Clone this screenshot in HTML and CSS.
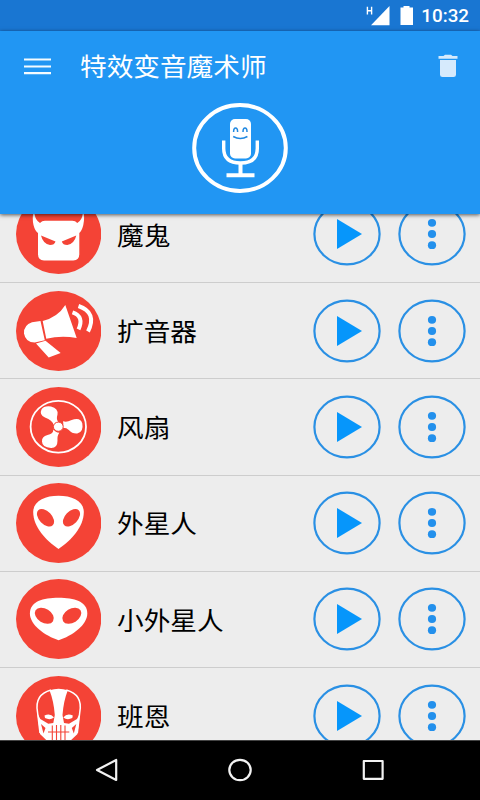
FILE: index.html
```html
<!DOCTYPE html>
<html lang="zh-CN">
<head>
<meta charset="utf-8">
<title>特效变音魔术师</title>
<link rel="stylesheet" href="styles.css">
</head>
<body>
<svg class="defs" width="0" height="0">
  <symbol id="play" viewBox="0 0 68 64"><ellipse cx="34" cy="32" rx="32.6" ry="30.4" fill="none" stroke="#2a90e4" stroke-width="2.2"/><path d="M24 17v30l25-15z" fill="#0696fb"/></symbol>
  <symbol id="more" viewBox="0 0 68 64"><ellipse cx="34" cy="32" rx="32.6" ry="30.4" fill="none" stroke="#2a90e4" stroke-width="2.2"/><g fill="#2390ec"><ellipse cx="34" cy="20.8" rx="4.1" ry="3.9"/><ellipse cx="34" cy="32" rx="4.1" ry="3.9"/><ellipse cx="34" cy="43.2" rx="4.1" ry="3.9"/></g></symbol>
</svg>
<div class="screen">
  <div class="status">
    <svg width="50" height="31" viewBox="0 0 50 31"><path d="M2.400 6.800v7.800M6.600 6.800v7.800M2.400 10.700h4.200" stroke="#fff" stroke-width="1.400" fill="none"/><path d="M24.500 6v19.300H6z" fill="#fff"/><path d="M35.500 7.500h3V6h6v1.500h3.500V25H35.500z" fill="#fff"/></svg>
    <span class="time">10:32</span>
  </div>
  <header class="header">
    <div class="toolbar">
      <svg class="menu" width="28" height="20" viewBox="0 0 28 20"><path d="M0 3.500h27M0 10.500h27M0 17.200h27" stroke="#f4fbff" stroke-width="2.200"/></svg>
      <h1 class="title">特效变音魔术师</h1>
      <svg class="trash" width="20" height="24" viewBox="0 0 20 24"><path d="M.5 2.100h5L7 .8h6l1.500 1.300h5v2.600H.5zM2 6.100h16v14.600q0 2.400-2.500 2.400h-11Q2 23.100 2 20.700z" fill="#d6eafc"/></svg>
    </div>
    <svg class="mic" width="96" height="90" viewBox="0 0 96 90"><ellipse cx="48" cy="45" rx="45.800" ry="42.900" fill="none" stroke="#fff" stroke-width="4"/><rect x="38" y="16" width="21" height="39.500" rx="5" fill="#fff"/><path d="M31.700 37.500v8q0 14.500 16.800 14.500t16.800-14.500v-8" fill="none" stroke="#fff" stroke-width="3.400"/><path d="M48.500 60v12M34.500 72.200h28" fill="none" stroke="#fff" stroke-width="4"/><path d="M41.600 29c0-5.200 4-5.200 4 0M51 29c0-5.200 4-5.200 4 0M41.200 33.500q7.100 4 14.200 0" fill="none" stroke="#2088e0" stroke-width="1.500"/></svg>
  </header>
  <main class="viewport">
    <ul class="list">
      <li class="row">
        <svg class="avatar" viewBox="0 0 85.300 80"><ellipse cx="42.650" cy="40" rx="42.650" ry="40" fill="#f44336"/><path d="M19 13Q17 25 24 29q2-2.300 5-2.300h27.300q3 0 5 2.300 7-4 5-16 3 9 1 18-1.500 6-4 8v21q0 6.400-6 6.400H28q-6 0-6-6.400V39q-3-2-4.500-8-2-9 1.500-18z" fill="#fff"/><path d="M25 41.500l14.500 5.900q-1 3.500-5.500 3.500-7-1-9-9.400zM60.300 41.500l-14.500 5.900q1 3.500 5.500 3.500 7-1 9-9.400z" fill="#f44336"/></svg>
        <span class="label">魔鬼</span>
        <svg class="action"><use href="#play"/></svg><svg class="action"><use href="#more"/></svg>
      </li>
      <li class="row">
        <svg class="avatar" viewBox="0 0 85.300 80"><ellipse cx="42.650" cy="40" rx="42.650" ry="40" fill="#f44336"/><path d="M24.500 30l4.300 19.300-10 2.200Q9.500 51.500 8 42.500 7.500 34 16 31.200zM26.700 30Q42 26 49.300 14L60.700 47Q45 44 30.300 47.800zM20 52.500l9.500-2.800L44.700 62l-12 4.400z" fill="#fff"/><path d="M56.500 21.300q12 4 6 17M62.500 15q19 6.500 9.500 25.500" fill="none" stroke="#fff" stroke-width="4"/></svg>
        <span class="label">扩音器</span>
        <svg class="action"><use href="#play"/></svg><svg class="action"><use href="#more"/></svg>
      </li>
      <li class="row">
        <svg class="avatar" viewBox="0 0 85.300 80"><ellipse cx="42.650" cy="40" rx="42.650" ry="40" fill="#f44336"/><ellipse cx="42.300" cy="39.700" rx="27.700" ry="25.900" fill="none" stroke="#fff" stroke-width="1.800"/><path d="M37.500 38Q36.500 33 29 30.500 23 27.500 25.500 22.500 28 18.500 35 19.500q7.500 2 6.500 8-1.500 5 .8 7.500-3 0-4.800 3zM47 34.300q4 1.200 8-1 9.500-3.800 11.300 3.200 1.500 8.500-5 10-5 .5-8.500-3.500-2-2.300-5.800-2.300.8-3.600 0-6.400zM37.500 42.500q1.800 3 5.800 3.200-2.300 3-1.800 8 0 7.500-6.500 7.300-9-1-9-6.500-.5-5 5.500-6.500 5.500-1 6-5.500z" fill="#fff"/><ellipse cx="42.300" cy="39.700" rx="4.900" ry="4.600" fill="#fff" stroke="#f44336" stroke-width="1"/></svg>
        <span class="label">风扇</span>
        <svg class="action"><use href="#play"/></svg><svg class="action"><use href="#more"/></svg>
      </li>
      <li class="row">
        <svg class="avatar" viewBox="0 0 85.300 80"><ellipse cx="42.650" cy="40" rx="42.650" ry="40" fill="#f44336"/><path d="M42.500 12.800C56 12.800 67.800 18 67.800 29 67.800 44 55 57.500 42.500 66 30 57.500 17.200 44 17.200 29 17.200 18 29 12.800 42.500 12.800z" fill="#fff"/><g fill="#f44336"><ellipse cx="29.500" cy="34.700" rx="10.400" ry="6.400" transform="rotate(46 29.500 34.700)"/><ellipse cx="55.500" cy="34.700" rx="10.400" ry="6.400" transform="rotate(-46 55.500 34.700)"/></g></svg>
        <span class="label">外星人</span>
        <svg class="action"><use href="#play"/></svg><svg class="action"><use href="#more"/></svg>
      </li>
      <li class="row">
        <svg class="avatar" viewBox="0 0 85.300 80"><ellipse cx="42.650" cy="40" rx="42.650" ry="40" fill="#f44336"/><path d="M42.600 18.800C58 18.800 71.300 22.500 71.300 34.500 71.300 46 56 57 42.600 61.200 29.200 57 13.900 46 13.900 34.500 13.900 22.500 27 18.800 42.600 18.800z" fill="#fff"/><g fill="#f44336"><ellipse cx="28.300" cy="36.700" rx="10.300" ry="7" transform="rotate(32 28.300 36.700)"/><ellipse cx="55.800" cy="36.700" rx="10.300" ry="7" transform="rotate(-32 55.800 36.700)"/></g></svg>
        <span class="label">小外星人</span>
        <svg class="action"><use href="#play"/></svg><svg class="action"><use href="#more"/></svg>
      </li>
      <li class="row">
        <svg class="avatar" viewBox="0 0 85.300 80"><ellipse cx="42.650" cy="40" rx="42.650" ry="40" fill="#f44336"/><path d="M35 14C24 17 19.500 25 21.500 36L24 57M50.300 14c11 3 15.500 11 13.500 22L61.300 57" fill="none" stroke="#fff" stroke-width="1.500"/><path d="M33.500 14.300Q42.600 11 51.800 14.300q-4.300 11-5.300 24.700l1.500 8 5 .8 8-4.800 3-6L61.500 58 52 67H33.300L24 58l-2.700-21 3 6 8 4.800 5-.8 1.500-8q-1-13.700-5.300-24.700z" fill="#fff"/><path d="M28.500 39.500q6-2.500 9.500 2-4 3-9 .5zM56.800 39.500q-6-2.500-9.500 2 4 3 9 .5z" fill="#fff"/><path d="M25 48l4.500 4-2 5.500zM60.300 48l-4.500 4 2 5.500z" fill="#f44336"/><path d="M32 56h21.300M36.300 49.500v16M40.500 49v17M44.800 49v17M49 49.500v16" fill="none" stroke="#f44336" stroke-width="1.100"/></svg>
        <span class="label">班恩</span>
        <svg class="action"><use href="#play"/></svg><svg class="action"><use href="#more"/></svg>
      </li>
    </ul>
  </main>
  <nav class="nav">
    <svg width="28" height="28" viewBox="0 0 28 28"><path d="M23.200 4v20L4 14z"/></svg>
    <svg width="28" height="28" viewBox="0 0 28 28"><ellipse cx="14" cy="14" rx="10.700" ry="10.200"/></svg>
    <svg width="28" height="28" viewBox="0 0 28 28"><rect x="4.800" y="5" width="18.800" height="17.800"/></svg>
  </nav>
</div>
</body>
</html>
```

FILE: styles.css
```css
* { box-sizing: border-box; }
body { margin: 0; font-family: "Noto Sans CJK SC", sans-serif; }
.defs { display: block; height: 0; }
.screen {
  width: 480px;
  height: 800px;
  display: flex;
  flex-direction: column;
  overflow: hidden;
  background: #ededed;
}
.status {
  height: 31px;
  flex: none;
  display: flex;
  justify-content: flex-end;
  padding-right: 11px;
  background: #1976d2;
}
.time {
  width: 48px;
  margin-left: 6px;
  font: 500 18.800px/33px Roboto, sans-serif;
  color: #fff;
  text-align: right;
}
.header {
  position: relative;
  z-index: 1;
  height: 183px;
  flex: none;
  background: #2196f3;
  box-shadow: 0 1px 4px rgba(0, 0, 0, .65);
}
.toolbar {
  height: 70px;
  display: flex;
  align-items: center;
  padding: 0 22px 0 24px;
}
.title {
  flex: 1;
  margin: 0 0 2px 28px;
  font-size: 25px;
  font-weight: 400;
  line-height: 36px;
  color: #fff;
  transform: scaleX(1.066);
  transform-origin: left;
}
.mic { display: block; margin: 2px auto 0; }
.viewport { flex: 1; min-height: 0; overflow: hidden; }
.list { list-style: none; margin: -27.400px 0 0; padding: 0; }
.row {
  height: 96.300px;
  display: flex;
  align-items: center;
  padding: 0 14px 0 16px;
  border-bottom: 1px solid #cdcdcd;
}
.avatar { width: 85.300px; height: 80px; flex: none; }
.label {
  flex: 1;
  margin: 0 0 1.500px 15.700px;
  font-size: 25px;
  line-height: 36px;
  color: #000;
  transform: scaleX(1.066);
  transform-origin: left;
}
.action { width: 68px; height: 64px; flex: none; }
.action + .action { margin-left: 17.300px; }
.nav {
  height: 60px;
  flex: none;
  display: flex;
  justify-content: center;
  align-items: center;
  gap: 105px;
  padding-bottom: 1px;
  background: #000;
  border-top: 1px solid #444;
}
.nav svg { fill: none; stroke: #f2f2f2; stroke-width: 2.200; stroke-linejoin: round; }
```
